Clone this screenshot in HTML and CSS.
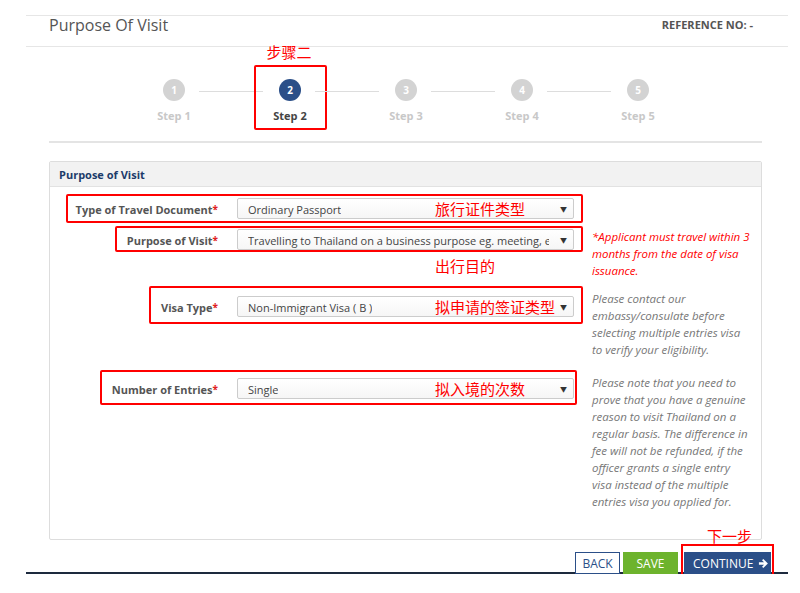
FILE: index.html
```html
<!DOCTYPE html>
<html lang="en">
<head>
  <meta charset="UTF-8">
  <meta name="viewport" content="width=device-width, initial-scale=1.0">
  <title>Purpose Of Visit</title>
  <link rel="stylesheet" href="styles.css">
</head>
<body>

<div class="page">
  <div class="topbar">
    <h1 class="title">Purpose Of Visit</h1>
    <div class="ref">REFERENCE NO: -</div>
  </div>

  <div class="steps">
    <div class="step done">
      <div class="step-box">
        <span class="circle">1</span>
        <span class="step-label">Step 1</span>
      </div>
    </div>
    <div class="step active">
      <div class="step-box">
        <span class="note-cn step-note">步骤二</span>
        <span class="circle">2</span>
        <span class="step-label">Step 2</span>
      </div>
    </div>
    <div class="step">
      <div class="step-box">
        <span class="circle">3</span>
        <span class="step-label">Step 3</span>
      </div>
    </div>
    <div class="step">
      <div class="step-box">
        <span class="circle">4</span>
        <span class="step-label">Step 4</span>
      </div>
    </div>
    <div class="step last">
      <div class="step-box">
        <span class="circle">5</span>
        <span class="step-label">Step 5</span>
      </div>
    </div>
  </div>

  <div class="panel">
    <div class="panel-head">Purpose of Visit</div>
    <div class="panel-body">

      <div class="row row-doc">
        <div class="fields">
          <div class="field">
            <label>Type of Travel Document<span class="req">*</span></label>
            <div class="select">
              <span class="value">Ordinary Passport</span>
              <span class="note-cn in-select">旅行证件类型</span>
              <span class="arrow">&#9660;</span>
            </div>
          </div>
        </div>
      </div>

      <div class="row row-purpose">
        <div class="fields">
          <div class="field">
            <label>Purpose of Visit<span class="req">*</span></label>
            <div class="select">
              <span class="value">Travelling to Thailand on a business purpose eg. meeting, e</span>
              <span class="arrow">&#9660;</span>
            </div>
          </div>
          <div class="note-cn below">出行目的</div>
        </div>
        <p class="hint warn">*Applicant must travel within 3 months from the date of visa issuance.</p>
      </div>

      <div class="row row-visa">
        <div class="fields">
          <div class="field">
            <label>Visa Type<span class="req">*</span></label>
            <div class="select">
              <span class="value">Non-Immigrant Visa ( B )</span>
              <span class="note-cn in-select">拟申请的签证类型</span>
              <span class="arrow">&#9660;</span>
            </div>
          </div>
        </div>
        <p class="hint">Please contact our embassy/consulate before selecting multiple entries visa to verify your eligibility.</p>
      </div>

      <div class="row row-entries">
        <div class="fields">
          <div class="field">
            <label>Number of Entries<span class="req">*</span></label>
            <div class="select">
              <span class="value">Single</span>
              <span class="note-cn in-select">拟入境的次数</span>
              <span class="arrow">&#9660;</span>
            </div>
          </div>
        </div>
        <p class="hint">Please note that you need to prove that you have a genuine reason to visit Thailand on a regular basis. The difference in fee will not be refunded, if the officer grants a single entry visa instead of the multiple entries visa you applied for.</p>
      </div>

    </div>
  </div>

  <div class="actions">
    <button class="btn btn-back">BACK</button>
    <button class="btn btn-save">SAVE</button>
    <div class="next-mark">
      <span class="note-cn next-note">下一步</span>
      <button class="btn btn-continue">CONTINUE
        <svg width="11" height="11" viewBox="0 0 12 12"><path d="M1 4.6h5.6L4.4 2.4 5.8 1 10.8 6 5.8 11 4.4 9.6 6.6 7.4H1z" fill="#fff"/></svg>
      </button>
    </div>
  </div>
</div>

</body>
</html>
```

FILE: styles.css
```css
body {
  margin: 0;
  font-family: 'Open Sans', 'Noto Sans CJK SC', sans-serif;
  color: #555;
  background-color: #fff;
}
.page {
  width: 762px;
  margin-left: 26px;
  padding-top: 15px;
}
.topbar {
  display: flex;
  justify-content: space-between;
  align-items: center;
  height: 30px;
  padding: 0 35px 0 23px;
  border-top: 1px solid #e6e6e6;
  border-bottom: 1px solid #e6e6e6;
}
.title {
  margin: 0;
  font-size: 16px;
  font-weight: normal;
  color: #555;
  margin-top: -13px;
}
.ref {
  font-size: 11px;
  font-weight: bold;
  color: #555;
  margin-top: -13px;
}

/* steps */
.steps {
  display: flex;
  margin-left: 23px;
  width: 713px;
  padding: 18px 0 11px 67px;
  box-sizing: border-box;
  border-bottom: 2px solid #e4e4e4;
}
.step {
  position: relative;
  width: 116px;
  display: flex;
  justify-content: center;
}
.step::after {
  content: '';
  position: absolute;
  top: 26px;
  left: 83px;
  width: 64px;
  height: 1px;
  background-color: #ddd;
}
.step.last::after {
  display: none;
}
.step-box {
  position: relative;
  width: 69px;
  height: 49px;
  padding-top: 12px;
  border: 2px solid transparent;
  border-radius: 2px;
  display: flex;
  flex-direction: column;
  align-items: center;
}
.step.active .step-box {
  border-color: #f00;
}
.circle {
  width: 22px;
  height: 22px;
  border-radius: 50%;
  background-color: #d3d3d3;
  color: #fff;
  font-size: 10px;
  font-weight: bold;
  line-height: 22px;
  text-align: center;
}
.step.active .circle {
  background-color: #2b4f88;
}
.step-label {
  margin-top: 7px;
  font-size: 11px;
  font-weight: bold;
  color: #c8c8c8;
}
.step.active .step-label {
  color: #444;
}

/* red annotations */
.note-cn {
  font-family: 'Noto Sans CJK SC', sans-serif;
  color: #f00;
  font-size: 15px;
  line-height: 20px;
  white-space: nowrap;
}
.step-note {
  position: absolute;
  top: -25px;
  left: 11px;
}

/* panel */
.panel {
  margin: 18px 0 0 23px;
  width: 713px;
  border: 1px solid #ddd;
  border-radius: 2px;
  box-sizing: border-box;
}
.panel-head {
  background-color: #f2f2f2;
  border-bottom: 1px solid #e2e2e2;
  padding: 0 9px;
  height: 24px;
  line-height: 25px;
  font-size: 11px;
  font-weight: bold;
  color: #1c3b6a;
}
.panel-body {
  padding: 7px 0 29px;
}
.row {
  display: flex;
  align-items: flex-start;
}
.fields {
  width: 533px;
  display: flex;
  flex-direction: column;
  align-items: flex-end;
}
.field {
  display: flex;
  align-items: center;
  border: 2px solid #f00;
  border-radius: 2px;
  padding: 2px 7px 2px 8px;
}
.field label {
  font-size: 11px;
  font-weight: bold;
  color: #555;
  margin-right: 19px;
  white-space: nowrap;
  padding-top: 2px;
}
.req {
  color: #e02020;
  font-size: 10px;
  vertical-align: top;
}
.select {
  position: relative;
  width: 337px;
  height: 21px;
  box-sizing: border-box;
  border: 1px solid #ccc;
  border-radius: 2px;
  padding: 0 24px 0 10px;
  background: linear-gradient(#fff, #f6f6f6);
  display: flex;
  align-items: center;
  overflow: hidden;
}
.value {
  font-size: 11px;
  color: #444;
  white-space: nowrap;
  overflow: hidden;
  padding-top: 2px;
}
.arrow {
  position: absolute;
  right: 6px;
  top: 5px;
  font-size: 7px;
  color: #333;
}
.in-select {
  position: absolute;
  left: 197px;
  top: 0;
}
.below {
  width: 337px;
  margin: 4px 9px 0 0;
  padding-left: 198px;
  box-sizing: border-box;
}
.hint {
  width: 158px;
  margin: 4px 0 0 9px;
  font-size: 11.5px;
  line-height: 17px;
  font-style: italic;
  color: #777;
}
.hint.warn {
  color: #f00;
  margin-top: 2px;
}
.row-doc {
  margin-bottom: 3px;
}
.row-purpose {
  margin-bottom: 7px;
}
.row-purpose .field {
  padding: 1px 7px 0 10px;
}
.row-visa {
  margin-bottom: 12px;
}
.row-visa .field {
  padding: 8px 7px 5px 10px;
}
.row-entries .field {
  padding: 6px 1px 4px 10px;
  margin-right: 6px;
}

/* buttons */
.actions {
  display: flex;
  justify-content: flex-end;
  align-items: flex-end;
  gap: 3px;
  height: 32px;
  padding-right: 14px;
  border-bottom: 2px solid #1d2a3e;
}
.btn {
  height: 22px;
  border: 1px solid #2b4f88;
  border-radius: 0;
  font-family: 'Open Sans', sans-serif;
  font-size: 12px;
  padding: 0 9px;
  cursor: pointer;
  margin-bottom: -2px;
}
.btn-back {
  background-color: #fff;
  color: #2b4f88;
  width: 45px;
  padding: 0;
}
.btn-save {
  background-color: #6db32d;
  border-color: #6db32d;
  color: #fff;
  width: 55px;
}
.next-mark {
  position: relative;
  border: 2px solid #f00;
  border-bottom: none;
  padding: 6px 1px 0;
  margin-bottom: -2px;
}
.next-note {
  position: absolute;
  top: -20px;
  right: 20px;
}
.btn-continue {
  display: flex;
  align-items: center;
  gap: 5px;
  background-color: #2b4f88;
  color: #fff;
  width: 87px;
  padding: 0 0 0 8px;
  margin-bottom: 0;
}
```
